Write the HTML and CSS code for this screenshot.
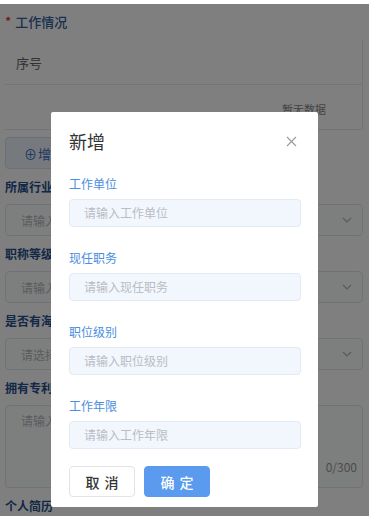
FILE: index.html
```html
<!DOCTYPE html>
<html lang="zh">
<head>
  <meta charset="UTF-8">
  <meta name="viewport" content="width=device-width, initial-scale=1.0">
  <link rel="stylesheet" href="styles.css">
</head>
<body>
  <div class="page">
    <h2 class="section-title"><span class="req">*</span>工作情况</h2>

    <div class="table">
      <div class="table-head">序号</div>
      <div class="table-body">暂无数据</div>
    </div>

    <button class="add-btn"><span class="plus">⊕</span>增加</button>

    <div class="field">
      <label class="field-label">所属行业</label>
      <div class="select">
        <span class="ph">请输入</span>
        <svg class="chev" width="10" height="6" viewBox="0 0 10 6"><polyline points="1,1 5,5 9,1" fill="none" stroke="#b0b4bb" stroke-width="1.2"/></svg>
      </div>
    </div>

    <div class="field">
      <label class="field-label">职称等级</label>
      <div class="select">
        <span class="ph">请输入</span>
        <svg class="chev" width="10" height="6" viewBox="0 0 10 6"><polyline points="1,1 5,5 9,1" fill="none" stroke="#b0b4bb" stroke-width="1.2"/></svg>
      </div>
    </div>

    <div class="field">
      <label class="field-label">是否有海外</label>
      <div class="select">
        <span class="ph">请选择</span>
        <svg class="chev" width="10" height="6" viewBox="0 0 10 6"><polyline points="1,1 5,5 9,1" fill="none" stroke="#b0b4bb" stroke-width="1.2"/></svg>
      </div>
    </div>

    <div class="field">
      <label class="field-label">拥有专利</label>
      <div class="textarea">
        <span class="ph">请输入</span>
        <span class="count">0/300</span>
      </div>
    </div>

    <div class="field">
      <label class="field-label">个人简历</label>
    </div>
  </div>

  <div class="mask"></div>

  <div class="dialog">
    <div class="dialog-head">
      <h3 class="dialog-title">新增</h3>
      <svg class="close" width="11" height="11" viewBox="0 0 11 11"><path d="M1 1L10 10M10 1L1 10" stroke="#9a9a9a" stroke-width="1.1" fill="none"/></svg>
    </div>

    <div class="d-field">
      <label class="d-label">工作单位</label>
      <div class="d-input">请输入工作单位</div>
    </div>
    <div class="d-field">
      <label class="d-label">现任职务</label>
      <div class="d-input">请输入现任职务</div>
    </div>
    <div class="d-field">
      <label class="d-label">职位级别</label>
      <div class="d-input">请输入职位级别</div>
    </div>
    <div class="d-field">
      <label class="d-label">工作年限</label>
      <div class="d-input">请输入工作年限</div>
    </div>

    <div class="d-actions">
      <button class="btn btn-cancel">取消</button>
      <button class="btn btn-ok">确定</button>
    </div>
  </div>
</body>
</html>
```

FILE: styles.css
```css
* {
  margin: 0;
  padding: 0;
  box-sizing: border-box;
}

body {
  width: 369px;
  height: 516px;
  overflow: hidden;
  position: relative;
  background: #fff;
  font-family: "Noto Sans CJK SC", "Noto Sans", sans-serif;
  color: #333;
}

.page {
  padding: 0 6px 0 5px;
}

.section-title {
  margin-top: 14px;
  height: 16px;
  line-height: 16px;
  font-size: 13px;
  font-weight: 500;
  color: #34609f;
}

.req {
  color: #e0303a;
  margin-right: 4px;
}

.table {
  margin-top: 10px;
  border-right: 1px solid #e6e8ec;
}

.table-head {
  height: 45px;
  line-height: 45px;
  padding-left: 11px;
  font-size: 13px;
  color: #666;
  border-bottom: 1px solid #e6e8ec;
}

.table-body {
  height: 45px;
  padding: 16px 36px 0 0;
  text-align: right;
  font-size: 11px;
  color: #888;
  border-bottom: 1px solid #e6e8ec;
}

.add-btn {
  display: block;
  margin-top: 7px;
  width: 110px;
  height: 32px;
  padding-left: 18px;
  text-align: left;
  background: #edf3fc;
  border: 1px solid #d4dff0;
  border-radius: 4px;
  font-family: inherit;
  font-size: 13px;
  color: #3d6fbf;
}

.plus {
  margin-right: 1px;
}

.field-label {
  display: block;
  margin: 10px 0 9px;
  height: 16px;
  line-height: 16px;
  font-size: 12px;
  font-weight: 700;
  color: #26508f;
}

.select {
  height: 32px;
  display: flex;
  align-items: center;
  justify-content: space-between;
  padding: 0 10px 0 15px;
  background: #fbfcfd;
  border: 1px solid #e1e4ea;
  border-radius: 4px;
}

.ph {
  font-size: 12px;
  color: #b4b8bf;
}

.textarea {
  height: 83px;
  display: flex;
  flex-direction: column;
  justify-content: space-between;
  padding: 6px 5px 12px 15px;
  background: #fbfcfd;
  border: 1px solid #e1e4ea;
  border-radius: 4px;
}

.count {
  align-self: flex-end;
  font-size: 12px;
  color: #999;
}

.mask {
  position: absolute;
  top: 4px;
  left: 0;
  right: 0;
  bottom: 0;
  background: rgba(0, 0, 0, 0.5);
}

.dialog {
  position: absolute;
  left: 51px;
  top: 112px;
  width: 267px;
  height: 395px;
  background: #fff;
  border-radius: 2px;
  padding: 17px 17px 10px 18px;
}

.dialog-head {
  display: flex;
  align-items: center;
  justify-content: space-between;
  height: 24px;
  padding-right: 4px;
}

.dialog-title {
  font-size: 18px;
  font-weight: 400;
  line-height: 24px;
  color: #333;
}

.d-label {
  display: block;
  margin: 23px 0 7px;
  height: 16px;
  line-height: 16px;
  font-size: 12px;
  font-weight: 400;
  color: #4a8ee0;
}

.d-input {
  height: 28px;
  line-height: 26px;
  padding-left: 14px;
  font-size: 12px;
  color: #b9bdc4;
  background: #f2f6fd;
  border: 1px solid #e3eaf5;
  border-radius: 4px;
}

.d-actions {
  display: flex;
  gap: 9px;
  margin-top: 17px;
}

.btn {
  width: 66px;
  height: 31px;
  border-radius: 4px;
  font-family: inherit;
  font-size: 14px;
  font-weight: 500;
  letter-spacing: 5px;
  text-indent: 5px;
}

.btn-cancel {
  background: #fff;
  border: 1px solid #e3e3e3;
  color: #333;
}

.btn-ok {
  background: #5a9bef;
  border: 1px solid #5a9bef;
  color: #fff;
}
```
